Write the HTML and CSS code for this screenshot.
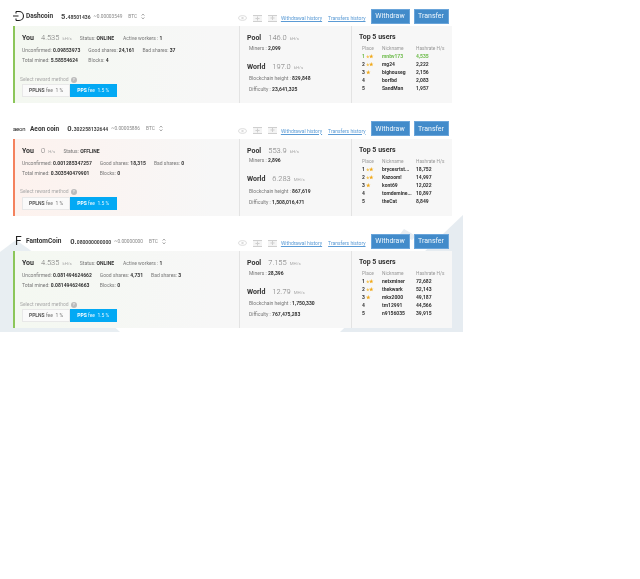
FILE: index.html
```html
<!DOCTYPE html>
<html lang="en">
<head>
<meta charset="utf-8">
<title>Wallet</title>
<link rel="stylesheet" href="styles.css">
</head>
<body>
<svg class="backdrop" width="464" height="332" viewBox="0 0 464 332">
  <polygon points="0,252 16,240 30,250 120,332 0,332" fill="#e8eef2"/>
  <polygon points="340,332 463,215 463,332" fill="#e6ecf1"/>
  <polygon points="400,234 404,229 416,236 412,240" fill="#e6ecf1"/>
</svg>
<svg class="sprite" width="0" height="0" aria-hidden="true">
  <symbol id="i-eye" viewBox="0 0 9 6"><ellipse cx="4.5" cy="3" rx="4" ry="2.4" fill="none" stroke="#dcdcdc"/><circle cx="4.5" cy="3" r="1.2" fill="#dcdcdc"/></symbol>
  <symbol id="i-in" viewBox="0 0 9 7"><rect width="9" height="7" fill="#f4f4f4"/><path d="M0 .5h9M0 6.5h9M4.5 1.5v4M2.5 3.5h4" stroke="#cfcfcf" fill="none"/></symbol>
  <symbol id="i-out" viewBox="0 0 9 7"><rect width="9" height="7" fill="#f4f4f4"/><path d="M0 .5h9M0 6.5h9M4.5 1v4M2.5 3h4" stroke="#cfcfcf" fill="none"/></symbol>
  <symbol id="i-sort" viewBox="0 0 4 7"><path d="M.6 2.6 2 1l1.4 1.6M.6 4.4 2 6l1.4-1.6" fill="none" stroke="#888" stroke-width=".7"/></symbol>
</svg>
<main class="page">

<section class="coin">
  <header class="coin-head">
    <svg class="logo" width="12" height="12" viewBox="0 0 12 12"><path d="M3 1.5h3a4.5 4.5 0 0 1 0 9H3M3 1.5v2M3 8.5v2M0 6h5.5" fill="none" stroke="#222" stroke-width="1.1"/></svg>
    <h2 class="coin-name">Dashcoin</h2>
    <span class="balance">5.<small>48501436</small></span>
    <span class="approx">~0.00003549</span><span class="btc">BTC</span><svg class="sort" width="4" height="7"><use href="#i-sort"/></svg>
    <div class="actions">
      <span class="icons"><svg width="9" height="6"><use href="#i-eye"/></svg><svg width="9" height="7"><use href="#i-in"/></svg><svg width="9" height="7"><use href="#i-out"/></svg></span>
      <a class="link">Withdrawal history</a><a class="link">Transfers history</a>
      <button class="btn btn-w">Withdraw</button><button class="btn btn-t">Transfer</button>
    </div>
  </header>
  <div class="card card-on">
    <div class="col-you">
      <div class="you-top"><b class="big">You</b><span class="rate">4.535</span><span class="unit">kH/s</span><span class="lab you-status">Status: <b>ONLINE</b></span><span class="lab">Active workers : <b>1</b></span></div>
      <div class="shares">
        <span class="lab">Unconfirmed: <b>0.09853973</b></span><span class="lab">Good shares: <b>24,161</b></span><span class="lab">Bad shares: <b>37</b></span>
        <span class="lab">Total mined: <b>5.58554624</b></span><span class="lab">Blocks: <b>4</b></span>
      </div>
      <div class="select">Select reward method <i class="help">?</i></div>
      <div class="methods"><span class="method"><b>PPLNS</b> fee &nbsp;1 %</span><span class="method active"><b>PPS</b> fee &nbsp;1.5 %</span></div>
    </div>
    <div class="col-pool">
      <div class="stat-top"><b class="big">Pool</b><span class="rate">146.0</span><span class="unit">kH/s</span></div>
      <div class="lab stat">Miners : <b>2,099</b></div>
      <div class="stat-top world"><b class="big">World</b><span class="rate">197.0</span><span class="unit">kH/s</span></div>
      <div class="lab stat">Blockchain height : <b>829,848</b></div>
      <div class="lab stat">Difficulty : <b>23,641,325</b></div>
    </div>
    <div class="col-top">
      <b class="big big-block">Top 5 users</b>
      <table class="users">
        <tr><th>Place</th><th>Nickname</th><th>Hashrate H/s</th></tr>
        <tr class="me"><td>1 <i class="medal">★<em>★</em></i></td><td>mnbv173</td><td>4,535</td></tr>
        <tr><td>2 <i class="medal">★<em>★</em></i></td><td>mg24</td><td>2,222</td></tr>
        <tr><td>3 <i class="medal"><em>★</em></i></td><td>bighouseg</td><td>2,156</td></tr>
        <tr><td>4</td><td>borfbd</td><td>2,083</td></tr>
        <tr><td>5</td><td>SandMan</td><td>1,957</td></tr>
      </table>
    </div>
  </div>
</section>

<section class="coin">
  <header class="coin-head">
    <span class="aeon">aeon</span>
    <h2 class="coin-name">Aeon coin</h2>
    <span class="balance">0.<small>302258132644</small></span>
    <span class="approx">~0.00005886</span><span class="btc">BTC</span><svg class="sort" width="4" height="7"><use href="#i-sort"/></svg>
    <div class="actions">
      <span class="icons"><svg width="9" height="6"><use href="#i-eye"/></svg><svg width="9" height="7"><use href="#i-in"/></svg><svg width="9" height="7"><use href="#i-out"/></svg></span>
      <a class="link">Withdrawal history</a><a class="link">Transfers history</a>
      <button class="btn btn-w">Withdraw</button><button class="btn btn-t">Transfer</button>
    </div>
  </header>
  <div class="card card-off">
    <div class="col-you">
      <div class="you-top"><b class="big">You</b><span class="rate">0</span><span class="unit">H/s</span><span class="lab you-status">Status: <b>OFFLINE</b></span></div>
      <div class="shares">
        <span class="lab">Unconfirmed: <b>0.001285347257</b></span><span class="lab">Good shares: <b>18,315</b></span><span class="lab">Bad shares: <b>0</b></span>
        <span class="lab">Total mined: <b>0.303540479901</b></span><span class="lab">Blocks: <b>0</b></span>
      </div>
      <div class="select">Select reward method <i class="help">?</i></div>
      <div class="methods"><span class="method"><b>PPLNS</b> fee &nbsp;1 %</span><span class="method active"><b>PPS</b> fee &nbsp;1.5 %</span></div>
    </div>
    <div class="col-pool">
      <div class="stat-top"><b class="big">Pool</b><span class="rate">553.9</span><span class="unit">kH/s</span></div>
      <div class="lab stat">Miners : <b>2,896</b></div>
      <div class="stat-top world"><b class="big">World</b><span class="rate">6.283</span><span class="unit">MH/s</span></div>
      <div class="lab stat">Blockchain height : <b>867,619</b></div>
      <div class="lab stat">Difficulty : <b>1,508,016,471</b></div>
    </div>
    <div class="col-top">
      <b class="big big-block">Top 5 users</b>
      <table class="users">
        <tr><th>Place</th><th>Nickname</th><th>Hashrate H/s</th></tr>
        <tr><td>1 <i class="medal">★<em>★</em></i></td><td>brycesrtst...</td><td>18,752</td></tr>
        <tr><td>2 <i class="medal">★<em>★</em></i></td><td>Kazoom!</td><td>14,997</td></tr>
        <tr><td>3 <i class="medal"><em>★</em></i></td><td>kont69</td><td>12,022</td></tr>
        <tr><td>4</td><td>tomdemine...</td><td>10,897</td></tr>
        <tr><td>5</td><td>theCat</td><td>8,849</td></tr>
      </table>
    </div>
  </div>
</section>

<section class="coin">
  <header class="coin-head">
    <span class="fantom">F</span>
    <h2 class="coin-name">FantomCoin</h2>
    <span class="balance">0.<small>080000000000</small></span>
    <span class="approx">~0.00000000</span><span class="btc">BTC</span><svg class="sort" width="4" height="7"><use href="#i-sort"/></svg>
    <div class="actions">
      <span class="icons"><svg width="9" height="6"><use href="#i-eye"/></svg><svg width="9" height="7"><use href="#i-in"/></svg><svg width="9" height="7"><use href="#i-out"/></svg></span>
      <a class="link">Withdrawal history</a><a class="link">Transfers history</a>
      <button class="btn btn-w">Withdraw</button><button class="btn btn-t">Transfer</button>
    </div>
  </header>
  <div class="card card-on">
    <div class="col-you">
      <div class="you-top"><b class="big">You</b><span class="rate">4.535</span><span class="unit">kH/s</span><span class="lab you-status">Status: <b>ONLINE</b></span><span class="lab">Active workers : <b>1</b></span></div>
      <div class="shares">
        <span class="lab">Unconfirmed: <b>0.081494624662</b></span><span class="lab">Good shares: <b>4,731</b></span><span class="lab">Bad shares: <b>3</b></span>
        <span class="lab">Total mined: <b>0.081494624663</b></span><span class="lab">Blocks: <b>0</b></span>
      </div>
      <div class="select">Select reward method <i class="help">?</i></div>
      <div class="methods"><span class="method"><b>PPLNS</b> fee &nbsp;1 %</span><span class="method active"><b>PPS</b> fee &nbsp;1.5 %</span></div>
    </div>
    <div class="col-pool">
      <div class="stat-top"><b class="big">Pool</b><span class="rate">7.155</span><span class="unit">MH/s</span></div>
      <div class="lab stat">Miners : <b>28,396</b></div>
      <div class="stat-top world"><b class="big">World</b><span class="rate">12.79</span><span class="unit">MH/s</span></div>
      <div class="lab stat">Blockchain height : <b>1,750,330</b></div>
      <div class="lab stat">Difficulty : <b>767,475,283</b></div>
    </div>
    <div class="col-top">
      <b class="big big-block">Top 5 users</b>
      <table class="users">
        <tr><th>Place</th><th>Nickname</th><th>Hashrate H/s</th></tr>
        <tr><td>1 <i class="medal">★<em>★</em></i></td><td>netxminer</td><td>72,682</td></tr>
        <tr><td>2 <i class="medal">★<em>★</em></i></td><td>thekwark</td><td>52,143</td></tr>
        <tr><td>3 <i class="medal"><em>★</em></i></td><td>mkx2000</td><td>49,187</td></tr>
        <tr><td>4</td><td>tm12991</td><td>44,566</td></tr>
        <tr><td>5</td><td>n9156035</td><td>39,915</td></tr>
      </table>
    </div>
  </div>
</section>

</main>
</body>
</html>
```
FILE: styles.css
```css
* { box-sizing: border-box; }
html, body { margin: 0; padding: 0; background: #fff; }
body { font-family: Roboto, "Liberation Sans", sans-serif; color: #333; position: relative; height: 579px; overflow: hidden; }
.backdrop { position: absolute; left: 0; top: 0; }
.sprite { position: absolute; }
.page { position: relative; padding: 8px 0 0 13px; width: 452px; display: flex; flex-direction: column; gap: 17.5px; filter: blur(.3px); }
.coin-head { height: 18px; padding-bottom: 2px; display: flex; align-items: center; white-space: nowrap; }
.logo { margin-right: 1px; flex: none; }
.aeon { font-size: 6px; width: 17px; color: #222; letter-spacing: -.2px; }
.fantom { font-size: 12px; width: 13px; color: #222; padding-left: 2px; }
.coin-name { margin: 0 8px 0 0; font-size: 6.5px; font-weight: 700; color: #333; }
.coin-head .fantom + .coin-name { margin-right: 9px; }
.balance { font-size: 7.5px; font-weight: 700; color: #444; }
.balance small { font-size: 5px; }
.approx { font-size: 4.8px; color: #888; margin-left: 3px; }
.btc { font-size: 4.8px; color: #888; margin-left: 6px; }
.sort { margin-left: 4px; flex: none; }
.actions { margin-left: auto; margin-right: 3.5px; display: flex; align-items: center; }
.icons { display: flex; gap: 6px; margin: 4px 4px 0 0; align-items: center; }
.link { font-size: 5px; color: #5b9bd5; text-decoration: underline; margin: 4px 6px 0 0; }
.link + .btn { margin-left: -1px; }
.btn { font: 400 7px Roboto, sans-serif; color: #eef6fc; background: #428bca; border: 1px solid #6aa5da; height: 15px; padding: 0; }
.btn-w { width: 39px; }
.btn-t { width: 35px; margin-left: 4px; }
.card { display: flex; height: 77px; background: #f7f7f7; border-left: 2px solid #8cc65a; }
.card-off { border-left-color: #f4825e; background: linear-gradient(90deg, #fdf2ee, #f7f7f7 45%); }
.card-on { background: linear-gradient(90deg, #f4f8f1, #f7f7f7 45%); }
.col-you { width: 225px; padding: 7px 0 0 7px; border-right: 1px solid #e3e3e3; }
.col-pool { width: 112px; padding: 7px 0 0 7px; border-right: 1px solid #e3e3e3; }
.col-top { flex: 1; padding: 7px 0 0 7px; }
.you-top, .stat-top { display: flex; align-items: baseline; height: 10px; }
.big { font-size: 7px; font-weight: 700; color: #333; }
.big-block { display: block; line-height: 8px; }
.rate { font-size: 7.5px; color: #777; margin-left: 7px; font-weight: 300; }
.unit { font-size: 4.4px; color: #aaa; margin-left: 3px; }
.lab { font-size: 5px; color: #777; white-space: nowrap; }
.lab b { color: #333; }
.you-status { margin-left: 8px; margin-right: 9px; }
.shares { display: grid; grid-template-columns: auto auto auto; justify-content: start; column-gap: 8px; row-gap: 4px; margin-top: 4px; line-height: 6px; }
.select { font-size: 5px; color: #aaa; margin: 12.5px 0 0 -2px; height: 7px; line-height: 7px; }
.help { display: inline-block; width: 6px; height: 6px; border-radius: 50%; background: #bbb; color: #fff; font-size: 4px; text-align: center; line-height: 6px; font-style: normal; vertical-align: 0; margin-left: 1px; }
.methods { display: flex; margin: 1.5px 0 0 0; }
.method { font-size: 5px; color: #777; width: 48px; height: 13px; line-height: 11px; text-align: center; border: 1px solid #e8e8e8; background: #fafafa; white-space: nowrap; }
.method b { color: #555; }
.method.active { background: #03a9f4; border-color: #03a9f4; color: #dff4fe; width: 46.5px; }
.method.active b { color: #fff; }
.stat { padding-left: 2px; margin-top: 1.5px; height: 7px; line-height: 7px; }
.world + .stat { margin-top: 3.5px; }
.stat + .stat { margin-top: 4px; }
.world { margin-top: 10px; }
.users { border-collapse: collapse; margin: 4px 0 0 3px; table-layout: fixed; }
.users th { font-size: 4.8px; font-weight: 400; color: #999; text-align: left; padding: 0; height: 7px; line-height: 7px; white-space: nowrap; overflow: visible; }
.users td { font-size: 5px; font-weight: 700; color: #333; padding: 0; height: 8px; line-height: 8px; white-space: nowrap; }
.users th:nth-child(1), .users td:nth-child(1) { width: 20px; }
.users th:nth-child(2), .users td:nth-child(2) { width: 34px; }
.users tr.me td { color: #6dbb4a; }
.medal { color: #f5c04a; font-size: 3.6px; font-style: normal; letter-spacing: -.9px; line-height: 0; }
.medal em { color: #f0a818; font-style: normal; font-size: 4.6px; line-height: 0; }
```
